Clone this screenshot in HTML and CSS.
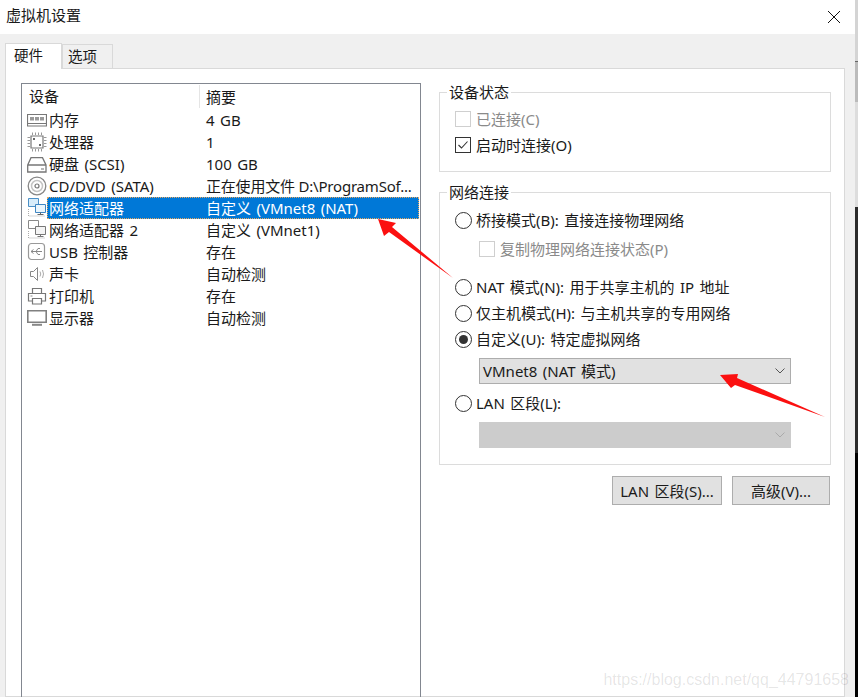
FILE: index.html
```html
<!DOCTYPE html>
<html lang="zh-CN">
<head>
<meta charset="utf-8">
<title>虚拟机设置</title>
<link rel="stylesheet" href="styles.css">
</head>
<body>
<div class="window">
  <header class="titlebar">
    <span>虚拟机设置</span>
    <svg class="close" viewBox="0 0 12 12" width="12" height="12"><path d="M0 0L12 12M12 0L0 12" stroke="#111" stroke-width="1" fill="none"/></svg>
  </header>
  <nav class="tabs">
    <span class="tab active">硬件</span>
    <span class="tab">选项</span>
  </nav>
  <main class="panel">
    <section class="list">
      <div class="row head"><span class="col-a">设备</span><span class="col-b">摘要</span></div>
      <div class="row">
        <svg class="ico" viewBox="0 0 20 20"><path d="M.5 4.500h19v9H.5zM.5 13.500v2.500h19v-2.500" fill="none" stroke="#777" stroke-width="1.200"/><path d="M3 7h4v3.500H3zM8 7h4v3.500H8zM13 7h4v3.500h-4z" fill="#999"/></svg>
        <span class="col-a">内存</span><span class="col-b">4 GB</span>
      </div>
      <div class="row">
        <svg class="ico" viewBox="0 0 20 20"><path d="M4 4h12v12H4z" fill="none" stroke="#777" stroke-width="1.200"/><path d="M5.500 .5v2.500M8.500 .5v2.500M11.500 .5v2.500M14.500 .5v2.500M5.500 17v2.500M8.500 17v2.500M11.500 17v2.500M14.500 17v2.500M.5 5.500h2.500M.5 8.500h2.500M.5 11.500h2.500M.5 14.500h2.500M17 5.500h2.500M17 8.500h2.500M17 11.500h2.500M17 14.500h2.500" stroke="#999"/><path d="M6 6h2v2H6zM12 12h2v2h-2z" fill="#666"/></svg>
        <span class="col-a">处理器</span><span class="col-b">1</span>
      </div>
      <div class="row">
        <svg class="ico" viewBox="0 0 20 20"><path d="M.7 11L4 3.700h11.500l3.500 7.300v7H.7zM.7 11h18.300" fill="none" stroke="#777" stroke-width="1.300"/><path d="M14 15h3" stroke="#888" stroke-width="1.200"/></svg>
        <span class="col-a">硬盘 (SCSI)</span><span class="col-b">100 GB</span>
      </div>
      <div class="row">
        <svg class="ico" viewBox="0 0 20 20"><circle cx="10" cy="10" r="8.800" fill="none" stroke="#888" stroke-width="1.300"/><circle cx="10" cy="10" r="5.500" fill="none" stroke="#c4c4c4" stroke-width="1.500"/><circle cx="10" cy="10" r="2" fill="none" stroke="#777" stroke-width="1.200"/></svg>
        <span class="col-a">CD/DVD (SATA)</span><span class="col-b path">正在使用文件 D:\ProgramSof...</span>
      </div>
      <div class="row selected">
        <svg class="ico" viewBox="0 0 20 20"><path d="M1.500 .5h10v8h-10z" fill="#d7ecfa" stroke="#4a8fc7"/><path d="M8.500 6.500h10v8h-10z" fill="#eaf5fc" stroke="#3f86c2"/><path d="M13.500 14.500v2M10.500 16.500h6" stroke="#666"/><path d="M1.500 11v7h17" fill="none" stroke="#aaa" stroke-dasharray="1 1"/></svg>
        <div class="bar"><span class="col-a">网络适配器</span><span class="col-b">自定义 (VMnet8 (NAT)</span></div>
      </div>
      <div class="row">
        <svg class="ico" viewBox="0 0 20 20"><path d="M1.500 .5h10v8h-10z" fill="#fff" stroke="#888"/><path d="M8.500 6.500h10v8h-10z" fill="#f4f4f4" stroke="#777"/><path d="M13.500 14.500v2M10.500 16.500h6" stroke="#777"/><path d="M1.500 11v7h17" fill="none" stroke="#aaa" stroke-dasharray="1 1"/></svg>
        <span class="col-a">网络适配器 2</span><span class="col-b">自定义 (VMnet1)</span>
      </div>
      <div class="row">
        <svg class="ico" viewBox="0 0 20 20"><rect x="1.500" y="1.500" width="16" height="16" rx="3" fill="none" stroke="#999" stroke-width="1.200"/><path d="M4 9.500h11M6.500 7.500L4 9.500l2.500 2M9 9.500l2-3h2M9 9.500l2 3h2" fill="none" stroke="#888"/></svg>
        <span class="col-a">USB 控制器</span><span class="col-b">存在</span>
      </div>
      <div class="row">
        <svg class="ico" viewBox="0 0 20 20"><path d="M3.500 7.500h3l4-4v13l-4-4h-3z" fill="none" stroke="#888"/><path d="M13 7.500q1.500 2.500 0 5M15.500 6q2 4 0 8" fill="none" stroke="#aaa"/></svg>
        <span class="col-a">声卡</span><span class="col-b">自动检测</span>
      </div>
      <div class="row">
        <svg class="ico" viewBox="0 0 20 20"><path d="M5.500 7V2.500h9V7M5.500 15h-4V7.500h17V15h-4" fill="none" stroke="#777" stroke-width="1.200"/><path d="M5.500 12.500h9v5.500h-9z" fill="none" stroke="#777" stroke-width="1.200"/><path d="M3.500 10h2" stroke="#888"/></svg>
        <span class="col-a">打印机</span><span class="col-b">存在</span>
      </div>
      <div class="row">
        <svg class="ico" viewBox="0 0 20 20"><path d="M.8 2.800h18.400v11.400H.8z" fill="none" stroke="#808080" stroke-width="1.600"/><path d="M5 16.800h10" stroke="#888" stroke-width="2"/></svg>
        <span class="col-a">显示器</span><span class="col-b">自动检测</span>
      </div>
    </section>
    <section class="side">
      <fieldset class="group status">
        <legend>设备状态</legend>
        <div class="opt disabled"><i class="check"></i>已连接(C)</div>
        <div class="opt"><i class="check on"><svg viewBox="0 0 14 14" width="14" height="14"><path d="M2.500 7l3 3 6-6.500" fill="none" stroke="#333" stroke-width="1.100"/></svg></i>启动时连接(O)</div>
      </fieldset>
      <fieldset class="group network">
        <legend>网络连接</legend>
        <div class="opt"><i class="radio"></i>桥接模式(B): 直接连接物理网络</div>
        <div class="opt sub disabled"><i class="check"></i>复制物理网络连接状态(P)</div>
        <div class="opt nat"><i class="radio"></i>NAT 模式(N): 用于共享主机的 IP 地址</div>
        <div class="opt"><i class="radio"></i>仅主机模式(H): 与主机共享的专用网络</div>
        <div class="opt"><i class="radio on"></i>自定义(U): 特定虚拟网络</div>
        <div class="select">VMnet8 (NAT 模式)<svg viewBox="0 0 10 6" width="10" height="6"><path d="M.5.500L5 5 9.500.500" fill="none" stroke="#555"/></svg></div>
        <div class="opt lan"><i class="radio"></i>LAN 区段(L):</div>
        <div class="select off"><svg viewBox="0 0 10 6" width="10" height="6"><path d="M.5.500L5 5 9.500.500" fill="none" stroke="#aaa"/></svg></div>
      </fieldset>
      <div class="buttons">
        <span class="btn b-lan">LAN 区段(S)...</span>
        <span class="btn b-adv">高级(V)...</span>
      </div>
    </section>
  </main>
  <svg class="arrows" viewBox="0 0 858 697" width="858" height="697">
    <polygon points="378,219 396,223 392,227 453,278 389,232 384,236" fill="#fb1010"/>
    <polygon points="720,375 738,374 737,378 825,417 735,385 731,388" fill="#fb1010"/>
  </svg>
  <div class="mark">https://blog.csdn.net/qq_44791658</div>
  <div class="edge">
    <span class="e1"></span><span class="e2"></span><span class="e3"></span><span class="e4"></span><span class="e5"></span><span class="e6"></span>
  </div>
</div>
</body>
</html>
```

FILE: styles.css
```css
* { box-sizing: border-box; }
html, body { margin: 0; padding: 0; }
body { background: #f0f0f0; color: #1a1a1a; font: 15px/22px "Noto Sans", "Noto Sans CJK SC", sans-serif; word-spacing: 1.500px; }
.window { position: relative; width: 858px; height: 697px; overflow: hidden; display: flex; flex-direction: column; background: #f0f0f0; }
.titlebar { height: 34px; flex: none; background: #fff; display: flex; align-items: center; justify-content: space-between; padding: 0 18px 4px 6px; }
.close { display: block; margin-top: 4px; }
.tabs { height: 34px; flex: none; display: flex; align-items: flex-end; padding-left: 5px; position: relative; z-index: 1; }
.tab { width: 51px; height: 24px; border: 1px solid #d9d9d9; border-bottom: 0; padding-left: 5px; line-height: 23px; font-size: 14.500px; background: #f0f0f0; }
.tab.active { width: 57px; height: 26px; margin-bottom: -1px; padding-left: 8px; line-height: 22px; background: #fff; }
.panel { flex: 1; min-height: 0; margin: 0 13px 0 5px; background: #fff; border: 1px solid #d9d9d9; padding: 14px 14px 0 15px; display: flex; align-items: flex-start; }
.list { width: 400px; height: 700px; flex: none; border: 1px solid #828790; padding-top: 1px; padding-right: 1px; }
.row { height: 22px; display: flex; align-items: center; white-space: nowrap; padding-left: 5px; }
.row.head { height: 24px; padding-left: 7px; line-height: 24px; }
.head .col-a { width: 171px; height: 23px; line-height: 23px; border-right: 1px solid #e5e5e5; align-self: flex-start; }
.head .col-b { margin-left: 6px; }
.ico { width: 20px; height: 20px; flex: none; margin-right: 2px; }
.row .col-a { flex: none; }
.row:not(.head) .col-a { width: 157px; }
.path { word-spacing: 0; letter-spacing: -.2px; }
.bar { flex: 1; height: 22px; margin-left: -2px; display: flex; align-items: center; background: #0078d7; color: #fff; border: 1px dotted #e8a860; }
.row.selected .col-a { width: 158px; padding-left: 1px; }
.side { margin-left: 18px; width: 392px; flex: none; display: flex; flex-direction: column; }
.group { margin: 0; border: 1px solid #dcdcdc; padding: 0 0 0 15px; min-width: 0; }
.group legend { margin-left: -8px; padding: 0 2px; line-height: 20px; }
.status { height: 90px; margin-top: -1px; padding-top: 4px; }
.network { height: 283px; margin-top: 10px; padding-top: 5px; }
.opt { height: 26px; display: flex; align-items: center; white-space: nowrap; }
.disabled { color: #8a8a8a; }
.check { width: 16px; height: 16px; border: 1px solid #333; margin-right: 5px; flex: none; display: block; }
.disabled .check { border-color: #cfcfcf; }
.check svg { display: block; }
.radio { width: 17px; height: 17px; border: 1px solid #333; border-radius: 50%; margin-right: 4px; flex: none; display: block; }
.radio.on { background: #333; background-clip: content-box; padding: 3px; }
.sub { margin-top: 3px; padding-left: 24px; }
.nat { margin-top: 12px; }
.select { margin: 6px 0 0 24px; width: 312px; height: 26px; background: #e1e1e1; border: 1px solid #adadad; display: flex; align-items: center; justify-content: space-between; padding: 0 5px 0 3px; }
.select.off { background: #cccccc; border-color: #cccccc; justify-content: flex-end; }
.lan { margin-top: 6px; }
.buttons { display: flex; justify-content: flex-end; gap: 10px; margin-top: 11px; padding-right: 1px; }
.btn { height: 29px; background: #e1e1e1; border: 1px solid #adadad; display: flex; align-items: center; justify-content: center; }
.b-lan { width: 110px; }
.b-adv { width: 98px; }
.arrows { position: absolute; left: 0; top: 0; pointer-events: none; }
.mark { position: absolute; right: 9px; top: 670px; color: rgba(0,0,0,.11); font: 16px/20px "Liberation Sans", sans-serif; word-spacing: 0; }
.edge { position: absolute; right: 0; top: 0; width: 3px; height: 697px; display: flex; flex-direction: column; }
.edge span { display: block; }
.e1 { height: 61px; background: #d4d4d4; }
.e2 { height: 1px; background: #666; }
.e3 { height: 40px; background: #bbb; }
.e4 { height: 105px; background: #ddd; }
.e5 { height: 246px; background: #2b2b2b; }
.e6 { height: 244px; background: #000; }
```
